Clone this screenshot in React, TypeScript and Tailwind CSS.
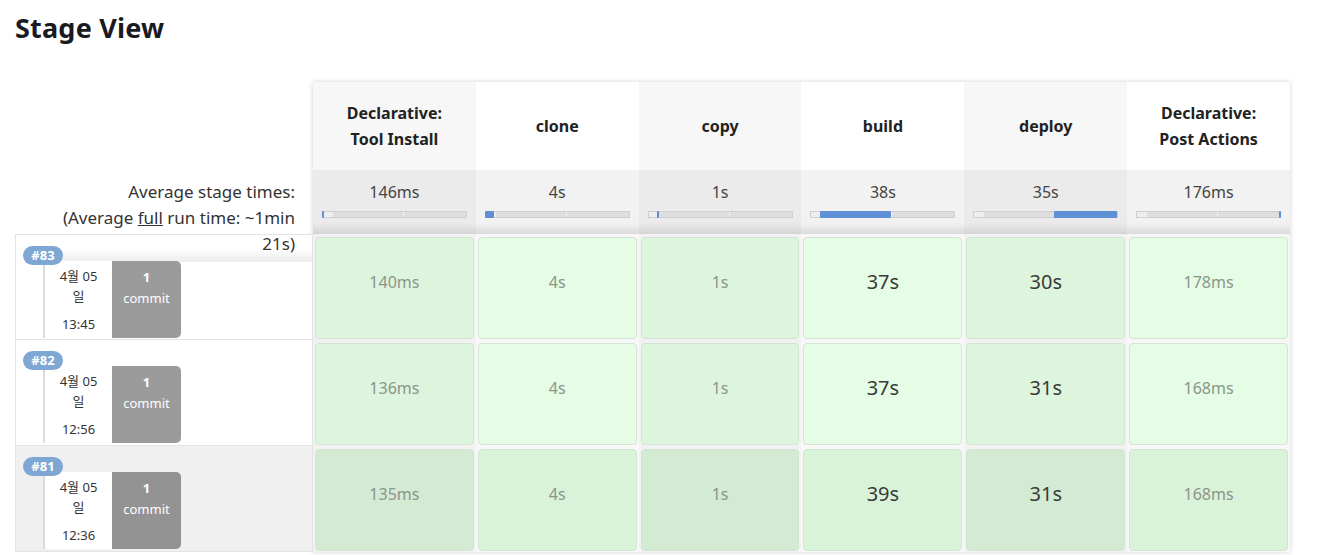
import React from "react";

type Stage = { name: string[]; avg: string; fill: { left: number; width: number }; odd: boolean };

const stages: Stage[] = [
  { name: ["Declarative:", "Tool Install"], avg: "146ms", fill: { left: 0, width: 2 }, odd: true },
  { name: ["clone"], avg: "4s", fill: { left: 0, width: 9 }, odd: false },
  { name: ["copy"], avg: "1s", fill: { left: 9, width: 2 }, odd: true },
  { name: ["build"], avg: "38s", fill: { left: 10, width: 71 }, odd: false },
  { name: ["deploy"], avg: "35s", fill: { left: 81, width: 63 }, odd: true },
  { name: ["Declarative:", "Post Actions"], avg: "176ms", fill: { left: 143, width: 2 }, odd: false },
];

type Run = { id: string; time: string; cells: string[]; hover?: boolean; shade?: boolean };

const runs: Run[] = [
  { id: "#83", time: "13:45", cells: ["140ms", "4s", "1s", "37s", "30s", "178ms"], shade: true },
  { id: "#82", time: "12:56", cells: ["136ms", "4s", "1s", "37s", "31s", "168ms"] },
  { id: "#81", time: "12:36", cells: ["135ms", "4s", "1s", "39s", "31s", "168ms"], hover: true },
];

const isBig = (v: string) => /^\d{2,}s$/.test(v);

function Bar({ left, width }: { left: number; width: number }) {
  return (
    <div className="relative mx-auto mt-[8px] h-[7px] w-[145px] border border-[#cfcfcf] bg-[#dedede]">
      <div className="absolute left-0 top-0 h-full w-[10px] bg-[#eeeeee]" />
      <div className="absolute left-[80px] top-0 h-full w-px bg-[#f4f4f4]" />
      <div
        className="absolute top-[-1px] h-[7px] rounded-[1px] bg-[#5f8fd4]"
        style={{ left: left - 1, width }}
      />
    </div>
  );
}

export default function App() {
  const font = { fontFamily: '"Noto Sans", "Noto Sans CJK KR", sans-serif' };
  return (
    <div className="min-h-[555px] w-[1325px] bg-white px-[15px] text-[#333]" style={font}>
      <h2 className="pt-[10px] text-[27px] font-bold leading-[36px] tracking-[0.2px] text-[#1a1a22]">
        Stage View
      </h2>
      <div className="mt-[36px] flex">
        {/* left column */}
        <div className="w-[298px] shrink-0">
          <div className="h-[88px]" />
          <div className="relative z-10 h-[64px] pr-[18px] pt-[9px] text-right text-[17px] leading-[26px] text-[#333]">
            <div className="whitespace-nowrap">Average stage times:</div>
            <div className="whitespace-nowrap">
              (Average <span className="underline">full</span> run time: ~1min
            </div>
            <div className="whitespace-nowrap">21s)</div>
          </div>
          {runs.map((r, i) => (
            <div
              key={r.id}
              className={`relative h-[106px] border border-[#e4e4e4] ${i > 0 ? "border-t-0" : ""} ${
                r.hover ? "bg-[#f0f0f0]" : "bg-white"
              }`}
            >
              {r.shade && (
                <div className="absolute left-[40px] right-0 top-0 h-[27px] bg-gradient-to-b from-white via-white to-[#ececec]" />
              )}
              <div className="absolute left-[7px] top-[11px] z-10 flex h-[19px] w-[40px] items-center justify-center rounded-full bg-[#7fa7d3] text-[13px] font-bold leading-none text-white">
                {r.id}
              </div>
              <div className="absolute left-[27px] top-[26px] flex h-[77px]">
                <div className="flex w-[69px] flex-col items-center border-l-[2px] border-[#dcdcdc] bg-white pt-[5px] text-[13px] leading-[20px] text-[#333]">
                  <span>4월 05</span>
                  <span>일</span>
                  <span className="mt-[8px]">{r.time}</span>
                </div>
                <div
                  className={`flex w-[69px] flex-col items-center rounded-r-[5px] pt-[6px] text-[13px] leading-[21px] text-white ${
                    r.hover ? "bg-[#939393]" : "bg-[#9b9b9b]"
                  }`}
                >
                  <span className="font-bold">1</span>
                  <span>commit</span>
                </div>
              </div>
            </div>
          ))}
        </div>

        {/* stage table */}
        <div className="w-[977px] shrink-0 shadow-[0_0_5px_rgba(0,0,0,0.18)]">
          <div className="grid h-[88px] grid-cols-6">
            {stages.map((s, i) => (
              <div
                key={i}
                className={`flex flex-col items-center justify-center text-[16px] font-bold leading-[26px] text-[#222] ${
                  s.odd ? "bg-[#f7f7f7]" : "bg-white"
                }`}
              >
                {s.name.map((n) => (
                  <span key={n}>{n}</span>
                ))}
              </div>
            ))}
          </div>
          <div className="grid h-[64px] grid-cols-6">
            {stages.map((s, i) => (
              <div
                key={i}
                className={`pt-[11px] text-center text-[16px] leading-[22px] text-[#444] shadow-[inset_0_-12px_10px_-8px_rgba(0,0,0,0.12)] ${
                  s.odd ? "bg-[#ebebeb]" : "bg-[#f2f2f2]"
                }`}
              >
                <div>{s.avg}</div>
                <Bar left={s.fill.left} width={s.fill.width} />
              </div>
            ))}
          </div>
          {runs.map((r) => (
            <div key={r.id} className="grid h-[106px] grid-cols-6">
              {r.cells.map((c, j) => {
                const odd = j % 2 === 0;
                const bg = r.hover
                  ? odd
                    ? "bg-[#d3ebd3]"
                    : "bg-[#d9f3d9]"
                  : odd
                  ? "bg-[#ddf5dd]"
                  : "bg-[#e4fde4]";
                return (
                  <div
                    key={j}
                    className={`px-[2px] pb-[1px] pt-[3px] ${odd ? "bg-[#f2f2f2]" : "bg-[#f7f7f7]"}`}
                  >
                    <div
                      className={`flex h-full items-center justify-center rounded-[4px] border border-[#d4e4d4] pb-[13px] ${bg} ${
                        isBig(c) ? "text-[20px] text-[#3a3a3a]" : "text-[16px] text-[#8c948c]"
                      }`}
                    >
                      {c}
                    </div>
                  </div>
                );
              })}
            </div>
          ))}
        </div>
      </div>
    </div>
  );
}
